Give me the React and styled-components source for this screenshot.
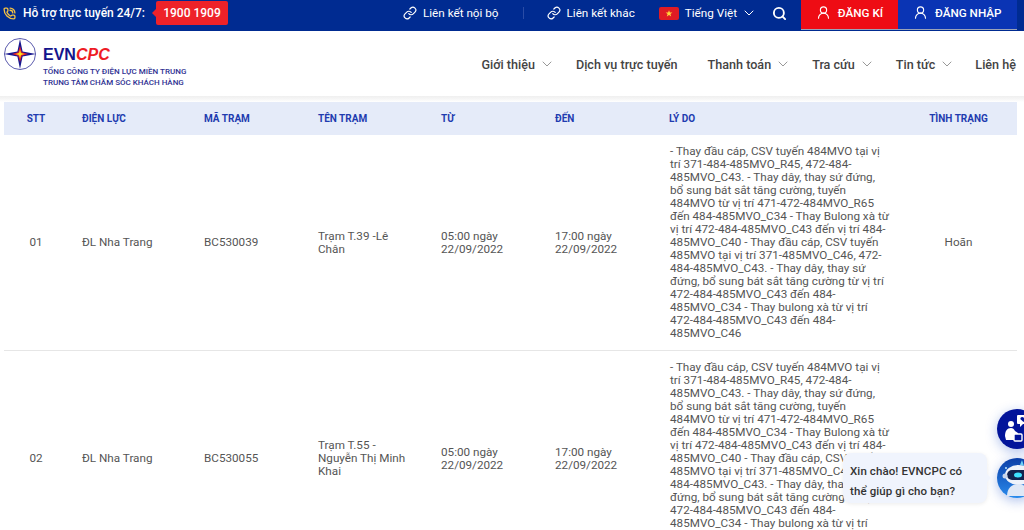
import React from "react";
import styled, { createGlobalStyle } from "styled-components";
import { Link, ChevronDown, Search, UserRound, PhoneCall } from "lucide-react";

const Global = createGlobalStyle`
  html, body { margin: 0; padding: 0; background: #fff; overflow: hidden; height: 530px; }
  body { font-family: Roboto, "Noto Sans", sans-serif; color: #444; }
  * { box-sizing: border-box; }
`;

const Page = styled.div`
  position: relative;
  width: 1024px;
  height: 530px;
  overflow: hidden;
`;

const TopBar = styled.div`
  display: flex;
  align-items: flex-start;
  height: 31px;
  background: #002b91;
  color: #fff;
  padding-right: 7px;
`;

const Hotline = styled.div`
  display: flex;
  align-items: center;
  height: 26px;
  padding-left: 3px;
  flex: 1;
`;

const HotlineLabel = styled.span`
  font-size: 12px;
  font-weight: 500;
  margin-left: 7px;
  width: 125px;
  white-space: nowrap;
`;

const Badge = styled.span`
  position: relative;
  display: flex;
  align-items: center;
  justify-content: center;
  width: 72px;
  height: 24px;
  margin-left: 8px;
  background: #ee2229;
  border-radius: 2px;
  font-size: 12px;
  font-weight: 500;
  &::before {
    content: "";
    position: absolute;
    left: -4px;
    top: 8px;
    border-top: 4px solid transparent;
    border-bottom: 4px solid transparent;
    border-right: 4px solid #ee2229;
  }
`;

const TopLink = styled.a`
  display: flex;
  align-items: center;
  gap: 6px;
  height: 26px;
  font-size: 11.7px;
  color: #fff;
  white-space: nowrap;
`;

const Separator = styled.span`
  width: 1px;
  height: 12px;
  margin: 7px 23px 0 24px;
  background: #2a4ca6;
`;

const Language = styled(TopLink)`
  margin-left: 24px;
  gap: 4px;
`;

const Flag = styled.svg`
  width: 20px;
  height: 13px;
  display: block;
  margin-right: 2px;
`;

const SearchButton = styled.span`
  display: flex;
  align-items: center;
  height: 26px;
  margin-left: 15px;
  margin-right: 14px;
`;

const AuthButton = styled.a`
  display: flex;
  align-items: center;
  justify-content: ${(p) => (p.$wide ? "flex-start" : "center")};
  gap: 7px;
  width: ${(p) => p.$w}px;
  height: 30px;
  padding-left: ${(p) => (p.$wide ? "15px" : "0")};
  padding-bottom: 4px;
  background: ${(p) => p.$bg};
  border-bottom: 1px solid #9aa3b8;
  font-size: 11.7px;
  font-weight: 500;
  color: #fff;
  white-space: nowrap;
`;

const Header = styled.header`
  display: flex;
  align-items: center;
  justify-content: space-between;
  height: 65px;
  background: #fff;
  padding: 0 8px 0 4px;
`;

const Brand = styled.div`
  display: flex;
  align-items: flex-start;
  align-self: flex-start;
  gap: 6px;
  margin-top: 7px;
`;

const BrandText = styled.div`
  display: flex;
  flex-direction: column;
  padding-top: 8px;
`;

const BrandName = styled.div`
  font-family: "Liberation Sans", Arial, sans-serif;
  font-size: 16px;
  line-height: 17px;
  font-weight: 700;
  color: #14148c;
  white-space: nowrap;
`;

const BrandAccent = styled.span`
  font-style: italic;
  color: #ee1c25;
`;

const BrandLine = styled.div`
  font-size: 8px;
  line-height: 11px;
  font-weight: 500;
  color: #2e3192;
  white-space: nowrap;
  &:nth-child(2) { margin-top: 3px; }
`;

const Nav = styled.nav`
  display: flex;
  align-items: center;
  margin-top: 1px;
`;

const NavItem = styled.a`
  display: flex;
  align-items: center;
  gap: 4px;
  margin-left: ${(p) => p.$gap}px;
  font-size: 12.6px;
  font-weight: 500;
  color: #444;
  white-space: nowrap;
`;

const Divider = styled.div`
  height: 6px;
  background: linear-gradient(#efefef 0, #f6f6f6 50%, #fff 100%);
`;

const TableWrap = styled.div`
  padding: 0 7px 0 4px;
`;

const Table = styled.table`
  width: 1013px;
  border-collapse: collapse;
  table-layout: fixed;
`;

const HeadCell = styled.th`
  height: 33px;
  padding: 0 14px;
  background: #e5ebf9;
  font-size: 10px;
  line-height: 13px;
  font-weight: 700;
  color: #1f3cb0;
  text-align: ${(p) => p.$align || "left"};
  white-space: nowrap;
`;

const Row = styled.tr`
  border-bottom: 1px solid #e6e6e6;
`;

const Cell = styled.td`
  padding: 10px 14px;
  font-size: 11.7px;
  line-height: 13px;
  color: #555;
  vertical-align: middle;
  text-align: ${(p) => p.$align || "left"};
`;

const ReasonCell = styled(Cell)`
  padding-left: 15px;
  padding-right: 10px;
`;

const Fab = styled.div`
  position: absolute;
  left: 997px;
  top: ${(p) => p.$top}px;
  width: 40px;
  height: 40px;
  border-radius: 50%;
  box-shadow: 0 3px 12px rgba(30, 80, 200, 0.35);
`;

const FabIcon = styled.svg`
  display: block;
  width: 40px;
  height: 40px;
`;

const Bubble = styled.div`
  position: absolute;
  left: 843px;
  top: 453px;
  width: 144px;
  height: 50px;
  padding: 8px 0 0 7px;
  background: #f0f4fd;
  border-radius: 8px;
  box-shadow: 0 1px 4px rgba(0, 0, 0, 0.08);
  font-size: 11.5px;
  line-height: 20px;
  font-weight: 500;
  letter-spacing: 0.1px;
  color: #333;
  &::after {
    content: "";
    position: absolute;
    right: -4px;
    top: 21px;
    border-top: 4px solid transparent;
    border-bottom: 4px solid transparent;
    border-left: 4px solid #f0f4fd;
  }
`;

const REASON =
  "- Thay đầu cáp, CSV tuyến 484MVO tại vị trí 371-484-485MVO_R45, 472-484-485MVO_C43. - Thay dây, thay sứ đứng, bổ sung bát sắt tăng cường, tuyến 484MVO từ vị trí 471-472-484MVO_R65 đến 484-485MVO_C34 - Thay Bulong xà từ vị trí 472-484-485MVO_C43 đến vị trí 484-485MVO_C40 - Thay đầu cáp, CSV tuyến 485MVO tại vị trí 371-485MVO_C46, 472-484-485MVO_C43. - Thay dây, thay sứ đứng, bổ sung bát sắt tăng cường từ vị trí 472-484-485MVO_C43 đến 484-485MVO_C34 - Thay bulong xà từ vị trí 472-484-485MVO_C43 đến 484-485MVO_C46";

const ROWS = [
  { stt: "01", code: "BC530039", name: "Trạm T.39 -Lê Chân" },
  { stt: "02", code: "BC530055", name: "Trạm T.55 - Nguyễn Thị Minh Khai" },
];

const COLS = [64, 122, 114, 123, 114, 114, 245, 117];

const NAV = [
  { label: "Giới thiệu", gap: 0, menu: true },
  { label: "Dịch vụ trực tuyến", gap: 21 },
  { label: "Thanh toán", gap: 30, menu: true },
  { label: "Tra cứu", gap: 21, menu: true },
  { label: "Tin tức", gap: 21, menu: true },
  { label: "Liên hệ", gap: 20 },
];

function Logo() {
  return (
    <svg width="33" height="33" viewBox="0 0 33 33">
      <circle cx="16" cy="16" r="15.5" fill="#fff" stroke="#5c5cae" strokeWidth="1" />
      <path d="M16 1 L18.6 13.4 L32 16 L18.6 18.6 L16 31 L13.4 18.6 L0 16 L13.4 13.4 Z" fill="#17178f" />
      <path d="M16 8 L17.8 14.2 L24 16 L17.8 17.8 L16 24 L14.2 17.8 L8 16 L14.2 14.2 Z" fill="#e8202a" />
      <path d="M16 11.5 L17 15 L20.5 16 L17 17 L16 20.5 L15 17 L11.5 16 L15 15 Z" fill="#ffe21a" />
    </svg>
  );
}

function SupportBadge() {
  return (
    <FabIcon viewBox="0 0 40 40">
      <circle cx="20" cy="20" r="20" fill="#02149a" />
      <circle cx="14" cy="15" r="3" fill="#fff" />
      <path d="M8 27c0-5 2-8 6-8 2 0 3 1 4 3l3 2v2h-4v5H9z" fill="#fff" />
      <rect x="17" y="25" width="8" height="7" rx="1" fill="#02149a" stroke="#fff" strokeWidth="1.4" />
      <path d="M21 6h11a1 1 0 0 1 1 1v7a1 1 0 0 1-1 1h-6l-3 3v-3h-2a1 1 0 0 1-1-1V7a1 1 0 0 1 1-1z" fill="#fff" />
      <path d="M26.5 13l-3-2.800a1.700 1.700 0 0 1 3-1.500 1.700 1.700 0 0 1 3 1.500z" fill="#02149a" />
    </FabIcon>
  );
}

function BotBadge() {
  return (
    <FabIcon viewBox="0 0 40 40">
      <defs>
        <linearGradient id="botBg" x1="0" y1="0" x2="0" y2="1">
          <stop offset="0" stopColor="#0a3ea8" />
          <stop offset="1" stopColor="#2a8bec" />
        </linearGradient>
      </defs>
      <circle cx="20" cy="20" r="20" fill="url(#botBg)" />
      <path d="M23 7 L25 2 L27 8 Z" fill="#6fd0f5" />
      <circle cx="9" cy="10" r="1" fill="#bfe6ff" />
      <ellipse cx="21" cy="17" rx="13" ry="10" fill="#eef3fb" />
      <rect x="10" y="12" width="22" height="10" rx="5" fill="#12224f" />
      <ellipse cx="21" cy="17" rx="4" ry="2.500" fill="#3fe0ff" />
      <path d="M10 38c0-8 5-12 11-12s11 4 11 12z" fill="#dfe8f6" />
      <circle cx="8" cy="18" r="2.500" fill="#c9d6ec" />
    </FabIcon>
  );
}

export default function App() {
  return (
    <Page>
      <Global />
      <TopBar>
        <Hotline>
          <PhoneCall size={13} color="#f5c242" strokeWidth={2.4} />
          <HotlineLabel>Hỗ trợ trực tuyến 24/7:</HotlineLabel>
          <Badge>1900 1909</Badge>
        </Hotline>
        <TopLink>
          <Link size={14} strokeWidth={2} />
          Liên kết nội bộ
        </TopLink>
        <Separator />
        <TopLink>
          <Link size={14} strokeWidth={2} />
          Liên kết khác
        </TopLink>
        <Language>
          <Flag viewBox="0 0 20 13">
            <rect width="20" height="13" rx="2" fill="#e01b24" />
            <path
              d="M10 3.200l.9 2.400h2.500l-2 1.500.8 2.500-2.200-1.500-2.200 1.500.8-2.500-2-1.500h2.500z"
              fill="#ffd83a"
            />
          </Flag>
          Tiếng Việt
          <ChevronDown size={16} strokeWidth={1.5} />
        </Language>
        <SearchButton>
          <Search size={15} strokeWidth={3} />
        </SearchButton>
        <AuthButton $bg="#ee0c14" $w={97}>
          <UserRound size={15} strokeWidth={1.8} />
          ĐĂNG KÍ
        </AuthButton>
        <AuthButton $bg="#0a34b4" $w={119} $wide>
          <UserRound size={15} strokeWidth={1.8} />
          ĐĂNG NHẬP
        </AuthButton>
      </TopBar>

      <Header>
        <Brand>
          <Logo />
          <BrandText>
            <BrandName>
              EVN<BrandAccent>CPC</BrandAccent>
            </BrandName>
            <BrandLine>TỔNG CÔNG TY ĐIỆN LỰC MIỀN TRUNG</BrandLine>
            <BrandLine>TRUNG TÂM CHĂM SÓC KHÁCH HÀNG</BrandLine>
          </BrandText>
        </Brand>
        <Nav>
          {NAV.map((n) => (
            <NavItem key={n.label} $gap={n.gap}>
              {n.label}
              {n.menu && <ChevronDown size={16} color="#888" strokeWidth={1.3} />}
            </NavItem>
          ))}
        </Nav>
      </Header>
      <Divider />

      <TableWrap>
        <Table>
          <colgroup>
            {COLS.map((w, i) => (
              <col key={i} width={w} />
            ))}
          </colgroup>
          <thead>
            <tr>
              <HeadCell $align="center">STT</HeadCell>
              <HeadCell>ĐIỆN LỰC</HeadCell>
              <HeadCell>MÃ TRẠM</HeadCell>
              <HeadCell>TÊN TRẠM</HeadCell>
              <HeadCell>TỪ</HeadCell>
              <HeadCell>ĐẾN</HeadCell>
              <HeadCell>LÝ DO</HeadCell>
              <HeadCell $align="center">TÌNH TRẠNG</HeadCell>
            </tr>
          </thead>
          <tbody>
            {ROWS.map((r) => (
              <Row key={r.stt}>
                <Cell $align="center">{r.stt}</Cell>
                <Cell>ĐL Nha Trang</Cell>
                <Cell>{r.code}</Cell>
                <Cell>{r.name}</Cell>
                <Cell>05:00 ngày 22/09/2022</Cell>
                <Cell>17:00 ngày 22/09/2022</Cell>
                <ReasonCell>{REASON}</ReasonCell>
                <Cell $align="center">Hoãn</Cell>
              </Row>
            ))}
          </tbody>
        </Table>
      </TableWrap>

      <Fab $top={409}>
        <SupportBadge />
      </Fab>
      <Fab $top={458}>
        <BotBadge />
      </Fab>
      <Bubble>
        Xin chào! EVNCPC có
        <br />
        thể giúp gì cho bạn?
      </Bubble>
    </Page>
  );
}
